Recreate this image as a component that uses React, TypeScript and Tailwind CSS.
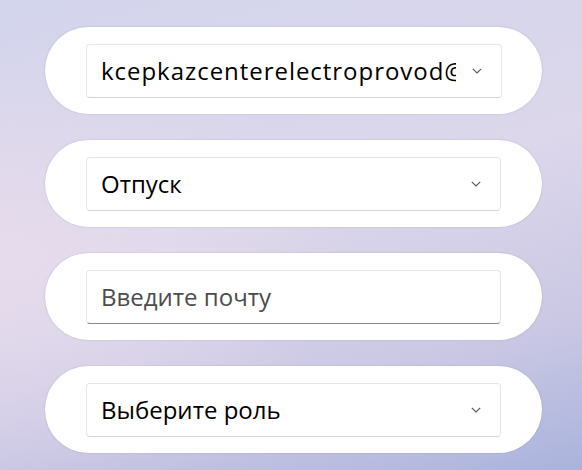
const font = { fontFamily: '"Open Sans", "Noto Sans", sans-serif' };

function Pill({ children }: { children: React.ReactNode }) {
  return (
    <div className="flex h-[87px] w-[497px] items-center rounded-full bg-white px-[41px] shadow-[0_0_2px_rgba(120,120,150,0.35)]">
      {children}
    </div>
  );
}

function Chevron() {
  return (
    <svg width="10" height="6" viewBox="0 0 10 6" className="ml-[16px] shrink-0">
      <polyline points="0.8,0.8 5,5 9.2,0.8" fill="none" stroke="#5a5a5a" strokeWidth="1.2" />
    </svg>
  );
}

function Combo({ value, wide }: { value: string; wide?: boolean }) {
  return (
    <div className="flex h-[54px] w-[416px] items-center rounded-[4px] border border-[#e6e6e6] border-b-[#d4d4d4] bg-white pl-[14px] pr-[19px]">
      <span
        className={
          wide
            ? "min-w-0 flex-1 overflow-hidden whitespace-nowrap text-[24px] tracking-[0.04em] text-black"
            : "min-w-0 flex-1 overflow-hidden whitespace-nowrap text-[24px] text-black"
        }
      >
        {value}
      </span>
      <Chevron />
    </div>
  );
}

export default function App() {
  return (
    <div
      className="h-[470px] w-[582px] overflow-hidden bg-[radial-gradient(ellipse_60%_45%_at_0%_55%,#e6dbec_0%,rgba(230,219,236,0)_100%),linear-gradient(165deg,#d3d5ec_0%,#dcd7eb_45%,#cbc8e4_75%,#aab3dc_100%)] pl-[45px] pt-[27px]"
      style={font}
    >
      <div className="flex flex-col gap-[26px]">
        <Pill>
          <Combo value="kcepkazcenterelectroprovod@gmail.com" wide />
        </Pill>
        <Pill>
          <Combo value="Отпуск" />
        </Pill>
        <Pill>
          <div className="flex h-[54px] w-[416px] items-center rounded-[4px] border border-[#e6e6e6] border-b-[#8a8a8a] bg-white px-[14px]">
            <input
              placeholder="Введите почту"
              className="w-full bg-transparent text-[24px] text-black outline-none placeholder:text-[#4c4c4c]"
              style={font}
            />
          </div>
        </Pill>
        <Pill>
          <Combo value="Выберите роль" />
        </Pill>
      </div>
    </div>
  );
}
